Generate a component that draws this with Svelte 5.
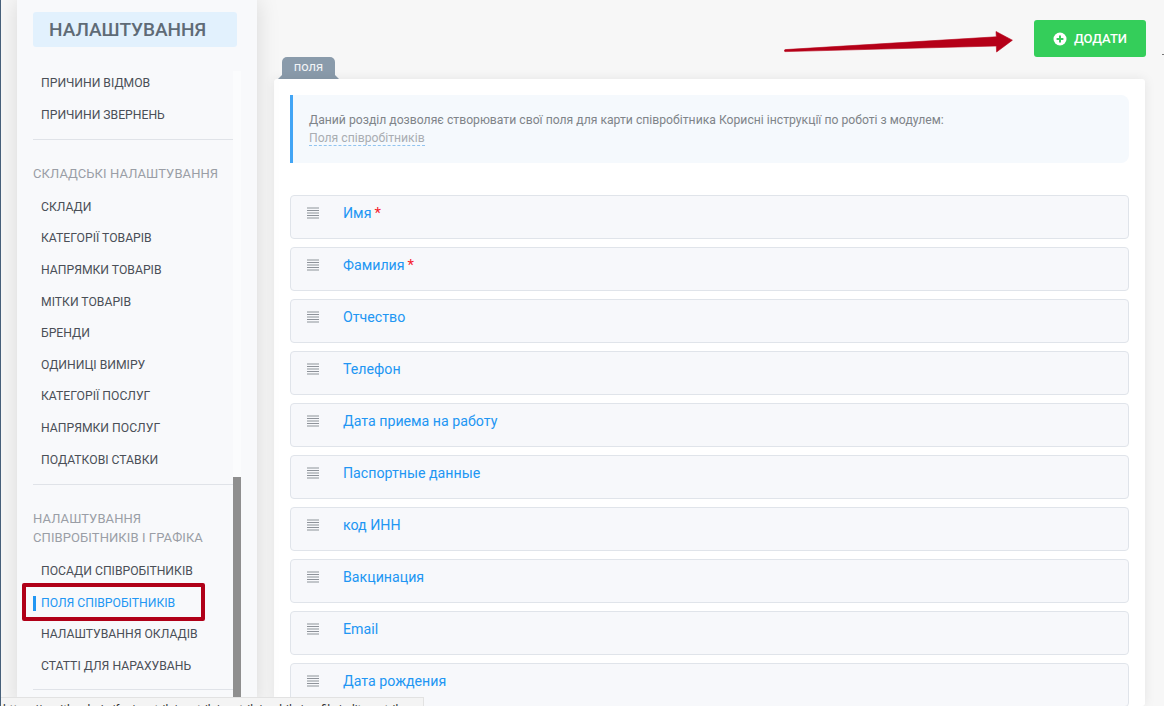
<script>
  const top = ['ПРИЧИНИ ВІДМОВ', 'ПРИЧИНИ ЗВЕРНЕНЬ'];
  const stock = ['СКЛАДИ', 'КАТЕГОРІЇ ТОВАРІВ', 'НАПРЯМКИ ТОВАРІВ', 'МІТКИ ТОВАРІВ', 'БРЕНДИ', 'ОДИНИЦІ ВИМІРУ', 'КАТЕГОРІЇ ПОСЛУГ', 'НАПРЯМКИ ПОСЛУГ', 'ПОДАТКОВІ СТАВКИ'];
  const staff = ['ПОСАДИ СПІВРОБІТНИКІВ', 'ПОЛЯ СПІВРОБІТНИКІВ', 'НАЛАШТУВАННЯ ОКЛАДІВ', 'СТАТТІ ДЛЯ НАРАХУВАНЬ'];
  const fields = [
    { name: 'Имя', req: true }, { name: 'Фамилия', req: true }, { name: 'Отчество' }, { name: 'Телефон' },
    { name: 'Дата приема на работу' }, { name: 'Паспортные данные' }, { name: 'код ИНН' }, { name: 'Вакцинация' },
    { name: 'Email' }, { name: 'Дата рождения' }
  ];
</script>

<div class="page">
  <aside class="side">
    <h1 class="title">НАЛАШТУВАННЯ</h1>
    <div class="scroller">
      <nav class="list">
        {#each top as t}<a class="item">{t}</a>{/each}
        <hr />
        <h2 class="section">СКЛАДСЬКІ НАЛАШТУВАННЯ</h2>
        {#each stock as t}<a class="item">{t}</a>{/each}
        <hr />
        <h2 class="section">НАЛАШТУВАННЯ СПІВРОБІТНИКІВ І ГРАФІКА</h2>
        {#each staff as t}<a class="item" class:active={t === 'ПОЛЯ СПІВРОБІТНИКІВ'}>{t}</a>{/each}
        <hr class="last" />
      </nav>
      <div class="track"><div class="thumb"></div></div>
    </div>
  </aside>

  <main class="main">
    <div class="toolbar">
      <button class="add">
        <svg width="14" height="14" viewBox="0 0 14 14"><circle cx="7" cy="7" r="6.5" fill="#fff"/><path d="M7 3.6v6.8M3.6 7h6.8" stroke="#34ce5a" stroke-width="2"/></svg>
        ДОДАТИ
      </button>
    </div>
    <div class="tab">поля</div>
    <section class="card">
      <div class="info">
        <p>Даний розділ дозволяє створювати свої поля для карти співробітника Корисні інструкції по роботі з модулем:</p>
        <a class="doc">Поля співробітників</a>
      </div>
      <div class="rows">
        {#each fields as f}
          <div class="row">
            <svg class="grip" width="12" height="12" viewBox="0 0 12 12"><path d="M0 1h12M0 3.5h12M0 6h12M0 8.5h12M0 11h12" stroke="#8e939a" stroke-width="1.2"/></svg>
            <span class="name">{f.name}{#if f.req}<b>*</b>{/if}</span>
          </div>
        {/each}
      </div>
    </section>
  </main>

  <div class="redbox"></div>
  <svg class="arrow" width="240" height="30" viewBox="0 0 240 30"><path d="M1.2 19.6 212.3 6.8 212 1.5 228.4 10.2 212.6 22 212.3 16 1.6 21.6A1 1 0 0 1 1.2 19.6Z" fill="#b50018" stroke="#b50018" stroke-width=".6" stroke-linejoin="round"/></svg>
  <div class="status">https://s.with.admin/fm/contrib/contrib/contrib/mobile/profile/edit-contrib</div>
  <div class="edge"></div>
</div>

<style>
  :global(body) { margin: 0; background: #f7f7f7; }
  * { box-sizing: border-box; }
  .page {
    position: relative; display: flex; height: 706px; width: 1164px; overflow: hidden;
    font-family: Roboto, "Liberation Sans", sans-serif; background: #f7f7f7;
    border-left: 1px solid #47607a;
  }
  .side {
    width: 240px; margin-left: 16px; background: #f8f9fb; flex: none; display: flex; flex-direction: column;
    box-shadow: 0 0 22px rgba(0, 0, 0, .13); padding: 12px 0 0 16px; position: relative; z-index: 1;
  }
  .title {
    margin: 0 20px 0 0; height: 35px; flex: none; background: #e2f1fd; border-radius: 3px; padding-left: 16px;
    font-size: 19px; font-weight: 500; line-height: 35px; color: #5f6b76; letter-spacing: 0;
  }
  .scroller { margin-top: 24px; display: flex; flex: 1; overflow: hidden; height: 635px; }
  .list { width: 200px; flex: none; margin-top: -3px; }
  .item {
    display: block; height: 31.6px; line-height: 31.6px; padding-left: 8px; font-size: 12.2px; color: #4a4f57;
    position: relative; white-space: nowrap;
  }
  .item.active { color: #2196f3; }
  .item.active::before {
    content: ''; position: absolute; left: 0; top: 8px; width: 3px; height: 15px; background: #2196f3;
  }
  hr { border: 0; border-top: 1px solid #e0e3e8; margin: 7.7px 0 0; }
  hr.last { margin-top: 7px; }
  .section {
    margin: 24px 0 9px; font-size: 13px; font-weight: 400; line-height: 19px; color: #9a9ea6; letter-spacing: .09px;
  }
  .track { width: 8px; background: #fbfcfd; padding-top: 406px; }
  .thumb { height: 240px; background: #8f8f8f; }

  .main { flex: 1; padding: 20px 18px 0 17px; display: flex; flex-direction: column; min-width: 0; min-height: 0; }
  .toolbar { display: flex; justify-content: flex-end; height: 37px; flex: none; }
  .add {
    width: 112px; height: 37px; border: 0; border-radius: 3px; background: #34ce5a; color: #fff;
    font: 500 13px Roboto, "Liberation Sans", sans-serif; display: flex; align-items: center; justify-content: center; gap: 7px;
  }
  .tab {
    position: relative; width: 53px; height: 22px; flex: none; margin: 0 0 0 8px; background: #8a9bab; color: #f2f4f6;
    border-radius: 5px 5px 0 0; font-size: 13px; line-height: 20px; text-align: center;
  }
  .tab::before, .tab::after {
    content: ''; position: absolute; bottom: 0; width: 4px; height: 4px; background: #8a9bab;
  }
  .tab::before { left: -4px; clip-path: polygon(100% 0, 100% 100%, 0 100%); }
  .tab::after { right: -4px; clip-path: polygon(0 0, 100% 100%, 0 100%); }
  .card {
    width: 871px; flex: 1; min-height: 0; background: #fff; border-radius: 3px; padding: 16px 16px 0; position: relative;
    box-shadow: 0 0 12px rgba(0, 0, 0, .08); overflow: hidden;
  }
  .info {
    height: 68px; background: #f5f9fd; border-left: 3px solid #42a5f5; border-radius: 0 8px 8px 0;
    padding: 16px 16px; font-size: 12.2px; line-height: 18px; color: #7f8489;
  }
  .info p { margin: 0; }
  .doc { color: #a9adb2; border-bottom: 1px dashed #90c4f0; display: inline-block; line-height: 14px; margin-top: 2px; }
  .rows { margin-top: 32px; display: flex; flex-direction: column; gap: 8px; }
  .row {
    height: 44px; flex: none; background: #f7f8fb; border: 1px solid #e0e4ea; border-radius: 4px;
    display: flex; align-items: flex-start; padding: 8px 0 0 16px; gap: 24px;
  }
  .grip { margin-top: 3px; flex: none; }
  .name { font-size: 14.2px; line-height: 18px; color: #2196f3; }
  .name b { color: #f5222d; font-weight: 400; font-size: 15px; margin-left: 3px; }

  .redbox {
    position: absolute; left: 21px; top: 583px; width: 183px; height: 38px; border: 4px solid #b00018; border-radius: 2px; z-index: 2;
  }
  .arrow { position: absolute; left: 783px; top: 30px; z-index: 2; }
  .status {
    position: absolute; left: -1px; top: 697px; width: 424px; height: 24px; padding: 3px 0 0 2px; z-index: 3;
    background: #f4f4f4; border: 1px solid #e2e2e2; font-size: 12px; line-height: 18px; color: #333; white-space: nowrap; overflow: hidden;
  }
  .edge { position: absolute; right: 0; top: 54px; width: 2px; height: 1px; background: #777; }
</style>
